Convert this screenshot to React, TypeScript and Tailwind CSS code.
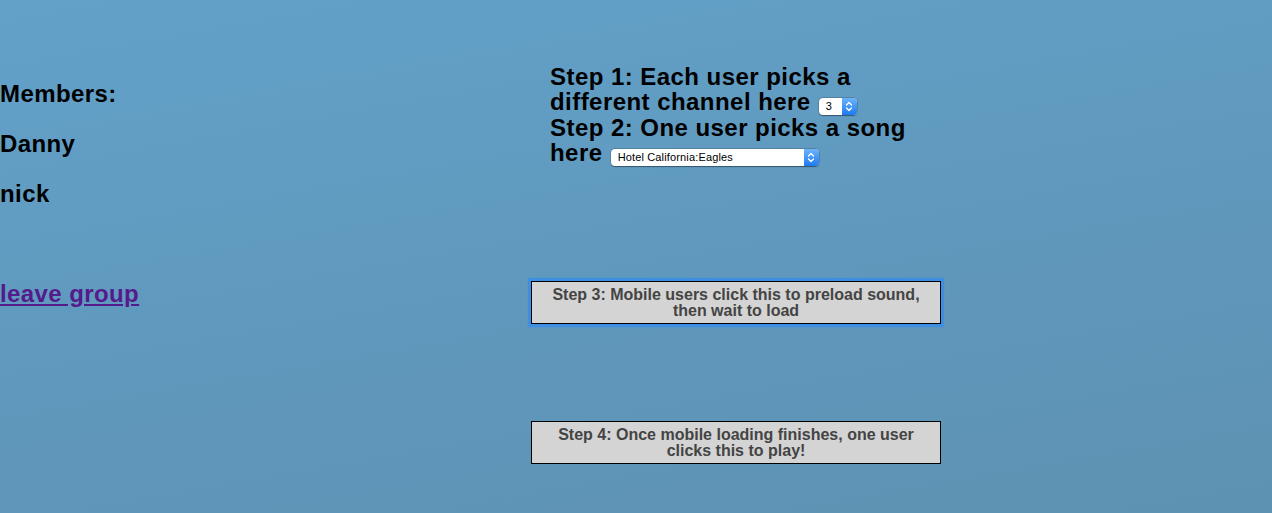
import React from "react";

const font = { fontFamily: '"Liberation Sans", Arial, Helvetica, sans-serif' };

function Chevrons() {
    return (
        <svg width="8" height="11" viewBox="0 0 8 11" fill="none" stroke="white" strokeWidth="1.3" strokeLinecap="round" strokeLinejoin="round">
            <path d="M1.5 4 L4 1.5 L6.5 4" />
            <path d="M1.5 7 L4 9.5 L6.5 7" />
        </svg>
    );
}

function FakeSelect({ value, width }: { value: string; width: string }) {
    return (
        <span
            className={`ml-[1px] inline-flex h-[17px] items-center rounded-[4px] bg-white align-baseline text-[11px] font-normal leading-none tracking-[0.15px] text-black shadow-[0_0_0_0.5px_rgba(0,0,0,0.25),0_0.5px_1px_rgba(0,0,0,0.35)] ${width}`}
        >
            <span className="flex-1 pl-[7px]">{value}</span>
            <span className="flex h-[17px] w-[15px] items-center justify-center rounded-r-[4px] bg-gradient-to-b from-[#6cb3fa] to-[#1a7af0]">
                <Chevrons />
            </span>
        </span>
    );
}

export default function App() {
    return (
        <div
            className="h-[513px] w-[1272px] overflow-hidden bg-[linear-gradient(170deg,#63a1c9_0%,#5f97bb_60%,#5e92b2_100%)] text-black"
            style={font}
        >
            <div className="flex">
                {/* Members list */}
                <div className="w-[531px] pt-[80px] text-[24px] font-bold leading-[28px] tracking-[0.4px]">
                    <p className="mb-[22px]">Members:</p>
                    <p className="mb-[22px]">Danny</p>
                    <p className="mb-[72px]">nick</p>
                    <a href="#" className="text-[#551a8b] underline">
                        leave group
                    </a>
                </div>

                {/* Steps */}
                <div className="w-[410px] pt-[64px]">
                    <div className="ml-[19px] w-[372px] text-[24px] font-bold leading-[25px] tracking-[0.45px]">
                        <div>
                            Step 1: Each user picks a different channel here{" "}
                            <FakeSelect value="3" width="w-[38px]" />
                        </div>
                        <div>
                            Step 2: One user picks a song here{" "}
                            <FakeSelect value="Hotel California:Eagles" width="w-[208px]" />
                        </div>
                    </div>

                    <button className="mt-[115px] block h-[43px] w-[410px] border border-black bg-[#d4d4d4] px-4 text-[16px] font-bold leading-4 text-[#444] shadow-[0_0_1px_3px_rgba(59,142,230,0.9)]">
                        Step 3: Mobile users click this to preload sound, then wait to load
                    </button>

                    <button className="mt-[97px] block h-[43px] w-[410px] border border-black bg-[#d4d4d4] px-4 text-[16px] font-bold leading-4 text-[#444]">
                        Step 4: Once mobile loading finishes, one user clicks this to play!
                    </button>
                </div>
            </div>
        </div>
    );
}
